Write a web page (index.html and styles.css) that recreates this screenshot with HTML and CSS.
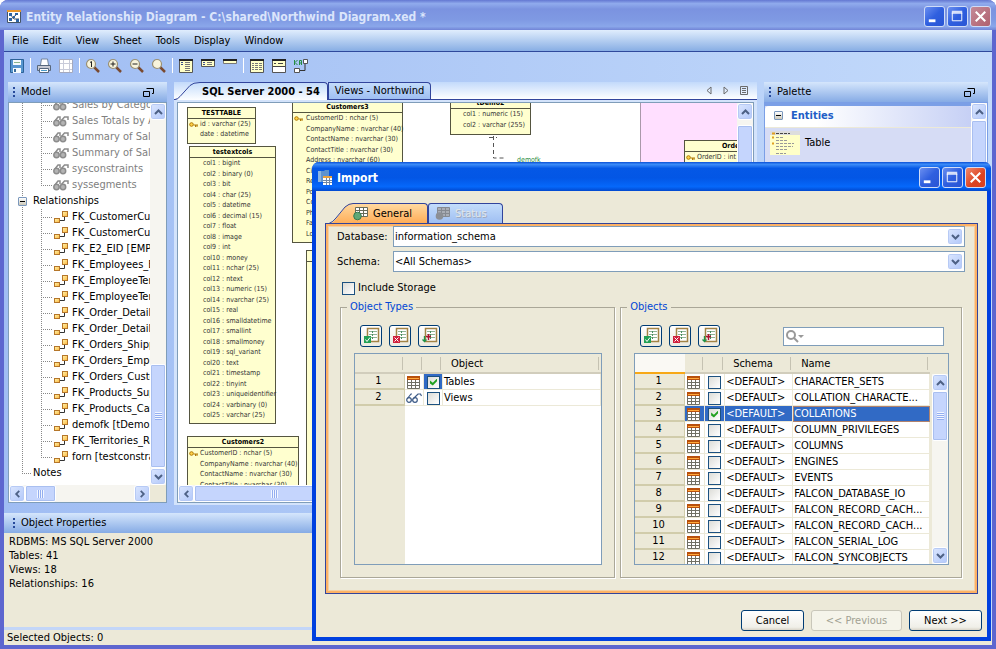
FILE: index.html
```html
<!DOCTYPE html>
<html lang="en">
<head>
  <meta charset="UTF-8">
  <meta name="viewport" content="width=device-width, initial-scale=1.0">
  <title>Entity Relationship Diagram</title>
  <link rel="stylesheet" href="styles.css">
</head>
<body>
  <!-- shared icons -->
  <svg class="defs" width="0" height="0">
    <defs>
      <linearGradient id="gold" x1="0" y1="0" x2="1" y2="1"><stop offset="0" stop-color="#fff6b0"/><stop offset="1" stop-color="#ffb73c"/></linearGradient>
      <linearGradient id="tabOrange" x1="0" y1="0" x2="0" y2="1"><stop offset="0" stop-color="#ffd9a0"/><stop offset="1" stop-color="#ffad57"/></linearGradient>
      <linearGradient id="tabBlue" x1="0" y1="0" x2="0" y2="1"><stop offset="0" stop-color="#c3dcfb"/><stop offset="1" stop-color="#fdfeff"/></linearGradient>
      <symbol id="i-view" viewBox="0 0 16 12"><g fill="#b4b4b4" stroke="#8c8c8c" stroke-width="1.500"><path fill="none" d="M1.500 6.500L5 2h2v3M7.500 6.500L11.500 2H15v3"/><circle cx="3.500" cy="8" r="2.700"/><circle cx="10" cy="8" r="2.700"/></g></symbol>
      <symbol id="i-glasses" viewBox="0 0 16 12"><g fill="none" stroke="#3c5a86" stroke-width="1.200"><circle cx="3" cy="8" r="2.300"/><circle cx="9" cy="8" r="2.300"/><path d="M1 7L5 2h1M7 7l5-5h2.500l1 2M5.300 8h1.400"/></g></symbol>
      <symbol id="i-fk" viewBox="0 0 14 12"><path d="M5.500 9.500h5V4" fill="none" stroke="#333"/><rect x=".5" y="7.500" width="5" height="4" fill="url(#gold)" stroke="#b5762a"/><rect x="8.500" y=".5" width="5" height="5" fill="url(#gold)" stroke="#b5762a"/></symbol>
      <symbol id="i-table" viewBox="0 0 13 13"><path fill="#fff" d="M0 0h13v13H0z"/><path d="M.5 3v9.500h12V3M.5 6.500h12M.5 9.500h12M4.500 3v9M8.500 3v9" fill="none" stroke="#6f6f64"/><path fill="#b8500c" d="M0 0h13v4H0z"/><path fill="#ffa83a" d="M1 2h11v1H1z"/></symbol>
      <symbol id="i-grid" viewBox="0 0 15 14"><path d="M2.500.5h12v9h-12zM2.500 3.500h12M2.500 6.500h12M6.500.5v9M10.500.5v9" fill="#fff" stroke="#676c5a"/><circle cx="4.500" cy="9" r="3.800" fill="#5fa877" stroke="#347a50"/></symbol>
      <symbol id="i-gridoff" viewBox="0 0 15 14"><path d="M2.500.5h12v9h-12zM2.500 3.500h12M2.500 6.500h12M6.500.5v9M10.500.5v9" fill="#a9adb5" stroke="#858991"/><circle cx="4.500" cy="9" r="3.800" fill="#8c8f95"/></symbol>
      <symbol id="i-list" viewBox="0 0 16 16"><path fill="#fff" stroke="#a28345" stroke-width="1.500" d="M3.500 1.500h11v13h-11z"/><path stroke="#8fb396" d="M5 4.500h8M5 7.500h8M5 10.500h8"/><path stroke="#4d8f62" stroke-dasharray="2 1" d="M8.500 4v8"/></symbol>
      <symbol id="i-key" viewBox="0 0 9 6"><circle cx="2.500" cy="2.500" r="1.800" fill="#ffd34a" stroke="#b27a05"/><path d="M4.500 3H9M6.500 3v2M8 3v2" stroke="#b27a05"/></symbol>
      <symbol id="i-up" viewBox="0 0 9 6"><path d="M1 5l3.500-3.500L8 5" fill="none" stroke="#4d6185" stroke-width="2"/></symbol>
      <symbol id="i-down" viewBox="0 0 9 6"><path d="M1 1l3.500 3.500L8 1" fill="none" stroke="#4d6185" stroke-width="2"/></symbol>
      <symbol id="i-left" viewBox="0 0 6 9"><path d="M5 1L1.500 4.500 5 8" fill="none" stroke="#4d6185" stroke-width="2"/></symbol>
      <symbol id="i-right" viewBox="0 0 6 9"><path d="M1 1l3.500 3.500L1 8" fill="none" stroke="#4d6185" stroke-width="2"/></symbol>
      <symbol id="i-float" viewBox="0 0 11 9"><path d="M.5 3.500h6v5h-6zM3.500 .5h7v5H9" fill="none" stroke="#000"/></symbol>
      <symbol id="i-min" viewBox="0 0 20 20"><path fill="#fff" d="M4 13h7v3H4z"/></symbol>
      <symbol id="i-max" viewBox="0 0 20 20"><path fill="none" stroke="#fff" d="M4.500 5.500h10v9h-10zM4 4.500h11M4 6.500h11"/></symbol>
      <symbol id="i-close" viewBox="0 0 20 20"><path stroke="#fff" stroke-width="2.200" d="M5 5l10 10M15 5L5 15"/></symbol>
      <symbol id="i-lens" viewBox="0 0 16 16"><path d="M9 9l5 5" stroke="#7a4a30" stroke-width="2.500"/><circle cx="6" cy="6" r="4.500" fill="#f8f4dc" stroke="#9a9074" stroke-width="1.200"/></symbol>
      <symbol id="i-check" viewBox="0 0 20 20"><use href="#i-list" x="3" y="1" width="16" height="16"/><path fill="#21a055" d="M3 10h7v7H3z"/><path d="M4.500 13.500l1.500 2 3-4" fill="none" stroke="#fff"/></symbol>
      <symbol id="i-uncheck" viewBox="0 0 20 20"><use href="#i-list" x="3" y="1" width="16" height="16"/><path fill="#d01f3c" d="M3 10h7v7H3z"/><path d="M4.500 11.500l4 4M8.500 11.500l-4 4" stroke="#fff"/></symbol>
      <symbol id="i-invert" viewBox="0 0 20 20"><use href="#i-list" x="3" y="1" width="16" height="16"/><path d="M9.500 14V8M7 10.500h5" stroke="#b01030" stroke-width="1.500"/><path d="M5.500 10v6M3.500 13.500l2 2 2-2" fill="none" stroke="#1f9447" stroke-width="1.300"/></symbol>
    </defs>
  </svg>

  <div class="app">
    <header class="titlebar">
      <svg class="app-icon" width="14" height="14"><path fill="#fff" stroke="#456" d="M.5.500h13v12H.5z"/><path fill="#e8972c" d="M0 0h14v2H0z"/><path d="M3 4l4 5h5M4 9l5-4" stroke="#456" fill="none"/><path fill="#2b62a4" d="M2 3h3v3H2zM6 6h2v2H6zM9 9h3v3H9zM8 3h3v2H8zM2 8h3v3H2z"/></svg>
      <h1>Entity Relationship Diagram - C:\shared\Northwind Diagram.xed *</h1>
      <div class="win-buttons">
        <button class="win-btn" aria-label="Minimize"><svg><use href="#i-min"/></svg></button>
        <button class="win-btn" aria-label="Maximize"><svg><use href="#i-max"/></svg></button>
        <button class="win-btn close" aria-label="Close"><svg><use href="#i-close"/></svg></button>
      </div>
    </header>

    <nav class="menu">
      <button>File</button><button>Edit</button><button>View</button><button>Sheet</button><button>Tools</button><button>Display</button><button>Window</button>
    </nav>

    <div class="toolbar">
      <button aria-label="Save"><svg width="16" height="16"><path fill="#5795cf" stroke="#2b6197" d="M1.500 1.500h13v13h-13z"/><path fill="#f5fafd" d="M4 2h8v5H4zM4 10h8v5H4z"/><path stroke="#8bb58c" d="M5 4.500h6"/><path fill="#396c9b" d="M5 11h2v3H5z"/></svg></button>
      <i class="sep"></i>
      <button aria-label="Print"><svg width="16" height="16"><path fill="#fff" stroke="#74869d" d="M4.500 7l1-6h6l1 6"/><path fill="#c7c9d2" stroke="#57677c" d="M1.500 7.500h13v5h-13z"/><path fill="#fff" stroke="#57677c" d="M3.500 10.500h9v4h-9z"/><path stroke="#499ac9" d="M5 12.500h6"/></svg></button>
      <button aria-label="Grid"><svg width="16" height="16"><path fill="#fff" stroke="#a5a9bd" d="M1.500 1.500h13v13h-13z"/><path stroke="#c8cbd9" d="M2 5.500h12M2 11.500h12M5.500 2v12M11.500 2v12"/></svg></button>
      <i class="sep"></i>
      <button aria-label="Actual size"><svg width="16" height="16"><use href="#i-lens"/><path d="M5 4.500l1.500-1V9" fill="none" stroke="#222"/></svg></button>
      <button aria-label="Zoom in"><svg width="16" height="16"><use href="#i-lens"/><path d="M3.500 6h5M6 3.500v5" stroke="#222"/></svg></button>
      <button aria-label="Zoom out"><svg width="16" height="16"><use href="#i-lens"/><path d="M3.500 6h5" stroke="#222"/></svg></button>
      <button aria-label="Zoom"><svg width="16" height="16"><use href="#i-lens"/></svg></button>
      <i class="sep"></i>
      <button aria-label="Show all columns"><svg width="16" height="16"><path fill="#ffffc8" stroke="#555" d="M1.500 1.500h13v13h-13z"/><path fill="#222" d="M1 1h14v2H1z"/><path stroke="#3a4d8c" d="M3 4.500h2M3 6.500h2"/><path stroke="#777" d="M7 4.500h5M7 6.500h5M7 8.500h5M7 10.500h5M7 12.500h5"/></svg></button>
      <button aria-label="Show keys"><svg width="16" height="16"><path fill="#ffffc8" stroke="#555" d="M1.500 1.500h13v7h-13z"/><path fill="#222" d="M1 1h14v2H1z"/><path stroke="#3a4d8c" d="M3 4.500h2M3 6.500h2"/><path stroke="#777" d="M7 4.500h5M7 6.500h5"/></svg></button>
      <button aria-label="Show names"><svg width="16" height="16"><path fill="#ffffc8" stroke="#777" d="M1.500 1.500h13v4h-13z"/><path fill="#222" d="M1 1h14v2H1z"/></svg></button>
      <i class="sep"></i>
      <button aria-label="Table"><svg width="16" height="16"><path fill="#ffffc8" stroke="#555" d="M1.500 1.500h13v13h-13z"/><path fill="#222" d="M1 1h14v2H1z"/><path stroke="#777" d="M3 5.500h2M6 5.500h3M10 5.500h3M3 7.500h2M6 7.500h3M10 7.500h3M3 9.500h2M6 9.500h3M10 9.500h3M3 11.500h2M6 11.500h3M10 11.500h3"/></svg></button>
      <button aria-label="Note"><svg width="16" height="16"><path fill="#fff" stroke="#555" d="M1.500 1.500h13v13h-13z"/><path fill="#ffffc8" d="M2 3h12v5H2z"/><path fill="#222" d="M1 1h14v2H1z"/><path stroke="#444" d="M3 5.500h2M7 5.500h5M2 8.500h12"/></svg></button>
      <button aria-label="Relationship"><svg width="16" height="16"><path stroke="#268c42" fill="none" d="M1.500 2v5M4.500 2l-2.500 2.500L4.500 7M6.500 7V2.500h2V7M6.500 5h2"/><path stroke="#333" d="M6 12.500h6V6" fill="none"/><path fill="#fff" stroke="#555" d="M1.500 10.500h5v4h-5zM10.500 1.500h4v4h-4z"/></svg></button>
    </div>

    <main class="workspace">
      <section class="panel model">
        <h2 class="panel-head"><i class="grip"></i>Model<svg width="11" height="9"><use href="#i-float"/></svg></h2>
        <div class="scroll-grid">
          <div class="tree-view">
            <ul class="tree">
              <li>
                <ul class="views">
                  <li><svg class="ti view"><use href="#i-view"/></svg>Sales by Category</li>
                  <li><svg class="ti view"><use href="#i-view"/></svg>Sales Totals by Amount</li>
                  <li><svg class="ti view"><use href="#i-view"/></svg>Summary of Sales by Quarter</li>
                  <li><svg class="ti view"><use href="#i-view"/></svg>Summary of Sales by Year</li>
                  <li><svg class="ti view"><use href="#i-view"/></svg>sysconstraints</li>
                  <li><svg class="ti view"><use href="#i-view"/></svg>syssegments</li>
                </ul>
              </li>
              <li>
                <div class="node"><i class="toggle"></i>Relationships</div>
                <ul>
                  <li><svg class="ti"><use href="#i-fk"/></svg>FK_CustomerCustomerDemo</li>
                  <li><svg class="ti"><use href="#i-fk"/></svg>FK_CustomerCustomerDemo</li>
                  <li><svg class="ti"><use href="#i-fk"/></svg>FK_E2_EID [EMP]</li>
                  <li><svg class="ti"><use href="#i-fk"/></svg>FK_Employees_Employees</li>
                  <li><svg class="ti"><use href="#i-fk"/></svg>FK_EmployeeTerritories</li>
                  <li><svg class="ti"><use href="#i-fk"/></svg>FK_EmployeeTerritories</li>
                  <li><svg class="ti"><use href="#i-fk"/></svg>FK_Order_Details_Orders</li>
                  <li><svg class="ti"><use href="#i-fk"/></svg>FK_Order_Details_Products</li>
                  <li><svg class="ti"><use href="#i-fk"/></svg>FK_Orders_Shippers</li>
                  <li><svg class="ti"><use href="#i-fk"/></svg>FK_Orders_Employees</li>
                  <li><svg class="ti"><use href="#i-fk"/></svg>FK_Orders_Customers</li>
                  <li><svg class="ti"><use href="#i-fk"/></svg>FK_Products_Suppliers</li>
                  <li><svg class="ti"><use href="#i-fk"/></svg>FK_Products_Categories</li>
                  <li><svg class="ti"><use href="#i-fk"/></svg>demofk [tDemo2]</li>
                  <li><svg class="ti"><use href="#i-fk"/></svg>FK_Territories_Region</li>
                  <li><svg class="ti"><use href="#i-fk"/></svg>forn [testconstraints]</li>
                </ul>
              </li>
              <li><div class="node leaf">Notes</div></li>
            </ul>
          </div>
          <div class="vbar"><span class="sb"><svg><use href="#i-up"/></svg></span><span class="track"></span><span class="thumb tree-thumb"></span><span class="sb"><svg><use href="#i-down"/></svg></span></div>
          <div class="hbar"><span class="sb"><svg><use href="#i-left"/></svg></span><span class="thumb tree-hthumb"></span><span class="track"></span><span class="sb"><svg><use href="#i-right"/></svg></span></div>
          <div class="corner"></div>
        </div>
      </section>

      <section class="diagram">
        <div class="sheet-tabs">
          <svg class="slant" width="26" height="18"><path fill="url(#tabBlue)" d="M0 18L4 17L17 3Q20 0 26 0v18z"/><path d="M0 17.500h1Q4 17 6 14.500L16 3.500Q19 .5 26 .5" fill="none" stroke="#31449c"/></svg>
          <button class="sheet-tab active">SQL Server 2000 - 54</button>
          <button class="sheet-tab">Views - Northwind</button>
          <div class="sheet-nav">
            <svg width="6" height="10"><path d="M5 1v7L1 4.500z" fill="none" stroke="#6b6b6b"/></svg>
            <svg width="6" height="10"><path d="M1 1v7l4-3.500z" fill="none" stroke="#6b6b6b"/></svg>
            <svg width="8" height="10"><path d="M.5.500h7v8h-7zM2 2.500h4M2 4.500h4M2 6.500h4" fill="none" stroke="#6b6b6b"/></svg>
          </div>
        </div>
        <div class="scroll-grid">
          <div class="canvas">
            <div class="zone"></div>
            <svg class="wires" width="400" height="80"><path d="M315.500 33v22h13M311 34.500h8" fill="none" stroke="#555" stroke-dasharray="4 3"/></svg>
            <span class="wire-label">demofk</span>
            <div class="entity e-testtable"><h3>TESTTABLE</h3>
              <p><svg><use href="#i-key"/></svg>id : varchar (25)</p><p>date : datetime</p></div>
            <div class="entity e-ext"><h3>testextcols</h3>
              <p>col1 : bigint</p><p>col2 : binary (0)</p><p>col3 : bit</p><p>col4 : char (25)</p><p>col5 : datetime</p>
              <p>col6 : decimal (15)</p><p>col7 : float</p><p>col8 : image</p><p>col9 : int</p><p>col10 : money</p>
              <p>col11 : nchar (25)</p><p>col12 : ntext</p><p>col13 : numeric (15)</p><p>col14 : nvarchar (25)</p><p>col15 : real</p>
              <p>col16 : smalldatetime</p><p>col17 : smallint</p><p>col18 : smallmoney</p><p>col19 : sql_variant</p><p>col20 : text</p>
              <p>col21 : timestamp</p><p>col22 : tinyint</p><p>col23 : uniqueidentifier</p><p>col24 : varbinary (0)</p><p>col25 : varchar (25)</p></div>
            <div class="entity e-cust3"><h3>Customers3</h3>
              <p><svg><use href="#i-key"/></svg>CustomerID : nchar (5)</p><p>CompanyName : nvarchar (40)</p><p>ContactName : nvarchar (30)</p><p>ContactTitle : nvarchar (30)</p>
              <p>Address : nvarchar (60)</p><p>City</p><p>Region</p><p>PostalCode</p><p>Country</p><p>Phone</p><p>Fax</p><p>Location</p></div>
            <div class="entity e-behind"><h3></h3></div>
            <div class="entity e-cust2"><h3>Customers2</h3>
              <p><svg><use href="#i-key"/></svg>CustomerID : nchar (5)</p><p>CompanyName : nvarchar (40)</p><p>ContactName : nvarchar (30)</p><p>ContactTitle : nvarchar (30)</p></div>
            <div class="entity e-demo"><h3>tDemo2</h3><p>col1 : numeric (15)</p><p>col2 : varchar (255)</p></div>
            <div class="entity e-orders"><h3>Orders</h3><p><svg><use href="#i-key"/></svg>OrderID : int</p></div>
          </div>
          <div class="vbar"><span class="sb"><svg><use href="#i-up"/></svg></span><span class="gap"></span><span class="thumb grow"></span></div>
          <div class="hbar"><span class="sb"><svg><use href="#i-left"/></svg></span><span class="thumb dia-hthumb"></span><span class="track"></span></div>
          <div class="corner"></div>
        </div>
      </section>

      <section class="panel palette">
        <h2 class="panel-head"><i class="grip"></i>Palette<svg width="11" height="9"><use href="#i-float"/></svg></h2>
        <div class="palette-body">
          <div class="palette-list">
            <h3 class="group"><i class="toggle"></i>Entities</h3>
            <div class="item">
              <svg width="30" height="24"><path fill="#ffffc8" d="M0 0h30v24H0z"/><path fill="#ddd" d="M0 0h30v4H0z"/><path stroke="#444" d="M6 2.500h14" stroke-dasharray="3 1"/><path stroke="#999" stroke-dasharray="3 1" d="M6 6.500h8M6 9.500h12M6 12.500h18M6 15.500h17M6 18.500h12M6 22.500h10"/><path stroke="#e0a020" stroke-width="2" d="M2 2.500h3M2 6.500h2M2 12.500h2"/></svg>
              Table
            </div>
          </div>
          <div class="vbar"><span class="sb"><svg><use href="#i-up"/></svg></span><span class="thumb grow"></span></div>
        </div>
      </section>
    </main>

    <section class="props">
      <h2 class="panel-head"><i class="grip"></i>Object Properties</h2>
      <ul>
        <li>RDBMS: MS SQL Server 2000</li>
        <li>Tables: 41</li>
        <li>Views: 18</li>
        <li>Relationships: 16</li>
      </ul>
    </section>
    <footer class="status">Selected Objects: 0</footer>
  </div>

  <div class="dialog" role="dialog" aria-labelledby="dlgTitle">
    <header class="dlg-title">
      <svg width="14" height="15"><path fill="#5d93cf" d="M0 1h6l1-1h4v12H0z"/><path fill="#8bb5e2" d="M0 1h3v11H0z"/><path fill="#fff" d="M5 7h9v8H5z"/><path fill="#e9a03a" d="M5 6h9v2H5z"/><path stroke="#6f87a5" d="M5 10.500h9M5 12.500h9M8.500 8v7M11.500 8v7"/></svg>
      <h2 id="dlgTitle">Import</h2>
      <div class="win-buttons">
        <button class="win-btn" aria-label="Minimize"><svg><use href="#i-min"/></svg></button>
        <button class="win-btn" aria-label="Maximize"><svg><use href="#i-max"/></svg></button>
        <button class="win-btn close" aria-label="Close"><svg><use href="#i-close"/></svg></button>
      </div>
    </header>

    <div class="dlg-body">
      <div class="dlg-tabs">
        <svg class="slant" width="24" height="21"><path fill="url(#tabOrange)" d="M0 21Q4 20 7 16L16 4q4-4 8-4v21z"/><path d="M0 20.500Q4 19 7 15L16 4q4-3.500 8-3.500" fill="none" stroke="#31449c"/></svg>
        <button class="dlg-tab active"><svg width="15" height="14"><use href="#i-grid"/></svg>General</button>
        <button class="dlg-tab" disabled><svg width="15" height="14"><use href="#i-gridoff"/></svg>Status</button>
      </div>

      <div class="page">
        <div class="field">
          <label for="database">Database:</label>
          <div class="combo"><select id="database"><option>information_schema</option></select><span class="sb"><svg><use href="#i-down"/></svg></span></div>
        </div>
        <div class="field">
          <label for="schema">Schema:</label>
          <div class="combo"><select id="schema"><option>&lt;All Schemas&gt;</option></select><span class="sb"><svg><use href="#i-down"/></svg></span></div>
        </div>
        <div class="storage"><input type="checkbox" id="storage"><label for="storage">Include Storage</label></div>

        <div class="groups">
          <fieldset class="types">
            <legend>Object Types</legend>
            <div class="tools">
              <button aria-label="Check all"><svg><use href="#i-check"/></svg></button>
              <button aria-label="Uncheck all"><svg><use href="#i-uncheck"/></svg></button>
              <button aria-label="Invert"><svg><use href="#i-invert"/></svg></button>
            </div>
            <div class="grid-box">
              <table>
                <colgroup><col class="c-num"><col class="c-icon"><col class="c-check"><col></colgroup>
                <thead><tr><th></th><th></th><th></th><th>Object</th></tr></thead>
                <tbody>
                  <tr><th>1</th><td><svg class="tb"><use href="#i-table"/></svg></td><td class="focus"><input type="checkbox" aria-label="Tables" checked></td><td>Tables</td></tr>
                  <tr><th>2</th><td><svg class="gl"><use href="#i-glasses"/></svg></td><td><input type="checkbox" aria-label="Views"></td><td>Views</td></tr>
                </tbody>
              </table>
              <div class="filler"></div>
            </div>
          </fieldset>

          <fieldset class="objects">
            <legend>Objects</legend>
            <div class="tools">
              <button aria-label="Check all"><svg><use href="#i-check"/></svg></button>
              <button aria-label="Uncheck all"><svg><use href="#i-uncheck"/></svg></button>
              <button aria-label="Invert"><svg><use href="#i-invert"/></svg></button>
              <div class="search"><svg width="18" height="13"><circle cx="5" cy="5" r="4" fill="none" stroke="#999" stroke-width="2"/><path d="M8 8l4 4" stroke="#999" stroke-width="2"/><path fill="#999" d="M12 5h6l-3 3z"/></svg><input type="text" aria-label="Search objects"></div>
            </div>
            <div class="grid-box">
              <table>
                <colgroup><col class="c-num"><col class="c-icon"><col class="c-check"><col class="c-schema"><col></colgroup>
                <thead><tr><th class="sorted"></th><th></th><th></th><th>Schema</th><th>Name</th></tr></thead>
                <tbody>
                  <tr><th>1</th><td><svg class="tb"><use href="#i-table"/></svg></td><td><input type="checkbox" aria-label="CHARACTER_SETS"></td><td>&lt;DEFAULT&gt;</td><td>CHARACTER_SETS</td></tr>
                  <tr><th>2</th><td><svg class="tb"><use href="#i-table"/></svg></td><td><input type="checkbox" aria-label="COLLATION_CHARACTER"></td><td>&lt;DEFAULT&gt;</td><td>COLLATION_CHARACTE...</td></tr>
                  <tr class="selected"><th>3</th><td><svg class="tb"><use href="#i-table"/></svg></td><td><input type="checkbox" aria-label="COLLATIONS" checked></td><td>&lt;DEFAULT&gt;</td><td>COLLATIONS</td></tr>
                  <tr><th>4</th><td><svg class="tb"><use href="#i-table"/></svg></td><td><input type="checkbox" aria-label="COLUMN_PRIVILEGES"></td><td>&lt;DEFAULT&gt;</td><td>COLUMN_PRIVILEGES</td></tr>
                  <tr><th>5</th><td><svg class="tb"><use href="#i-table"/></svg></td><td><input type="checkbox" aria-label="COLUMNS"></td><td>&lt;DEFAULT&gt;</td><td>COLUMNS</td></tr>
                  <tr><th>6</th><td><svg class="tb"><use href="#i-table"/></svg></td><td><input type="checkbox" aria-label="ENGINES"></td><td>&lt;DEFAULT&gt;</td><td>ENGINES</td></tr>
                  <tr><th>7</th><td><svg class="tb"><use href="#i-table"/></svg></td><td><input type="checkbox" aria-label="EVENTS"></td><td>&lt;DEFAULT&gt;</td><td>EVENTS</td></tr>
                  <tr><th>8</th><td><svg class="tb"><use href="#i-table"/></svg></td><td><input type="checkbox" aria-label="FALCON_DATABASE_IO"></td><td>&lt;DEFAULT&gt;</td><td>FALCON_DATABASE_IO</td></tr>
                  <tr><th>9</th><td><svg class="tb"><use href="#i-table"/></svg></td><td><input type="checkbox" aria-label="FALCON_RECORD_CACHE"></td><td>&lt;DEFAULT&gt;</td><td>FALCON_RECORD_CACH...</td></tr>
                  <tr><th>10</th><td><svg class="tb"><use href="#i-table"/></svg></td><td><input type="checkbox" aria-label="FALCON_RECORD_CACHE"></td><td>&lt;DEFAULT&gt;</td><td>FALCON_RECORD_CACH...</td></tr>
                  <tr><th>11</th><td><svg class="tb"><use href="#i-table"/></svg></td><td><input type="checkbox" aria-label="FALCON_SERIAL_LOG"></td><td>&lt;DEFAULT&gt;</td><td>FALCON_SERIAL_LOG</td></tr>
                  <tr><th>12</th><td><svg class="tb"><use href="#i-table"/></svg></td><td><input type="checkbox" aria-label="FALCON_SYNCOBJECTS"></td><td>&lt;DEFAULT&gt;</td><td>FALCON_SYNCOBJECTS</td></tr>
                </tbody>
              </table>
              <div class="vbar"><span class="sb"><svg><use href="#i-up"/></svg></span><span class="thumb list-thumb"></span><span class="track"></span><span class="sb"><svg><use href="#i-down"/></svg></span></div>
            </div>
          </fieldset>
        </div>
      </div>

      <div class="actions">
        <button class="btn">Cancel</button>
        <button class="btn wide" disabled>&lt;&lt; Previous</button>
        <button class="btn next">Next &gt;&gt;</button>
      </div>
    </div>
  </div>
</body>
</html>
```
FILE: styles.css
```css
* {
  box-sizing: border-box;
}
body {
  margin: 0;
  height: 100vh;
  overflow: hidden;
  position: relative;
  background: #fff;
  color: #000;
  font-family: "DejaVu Sans Condensed", "Noto Sans", sans-serif;
  font-size: 11px;
  line-height: 16px;
}
h1, h2, h3, p, ul {
  margin: 0;
  padding: 0;
  font-size: inherit;
  font-weight: normal;
}
ul {
  list-style: none;
}
button, input, select {
  font: inherit;
  color: inherit;
}
button {
  padding: 0;
  border: 0;
  background: none;
}
.defs {
  position: absolute;
}

/* main window */
.app {
  height: 100%;
  display: flex;
  flex-direction: column;
  border: solid #5d66cf;
  border-width: 0 4px 4px;
  border-radius: 8px 8px 0 0;
  background: linear-gradient(90deg, #a0bdf3, #c3dafb);
}
.titlebar {
  height: 30px;
  flex: none;
  margin: 0 -4px;
  padding: 3px 5px 0 7px;
  display: flex;
  align-items: center;
  gap: 5px;
  border-radius: 8px 8px 0 0;
  background: linear-gradient(#6377d2, #90abed 12%, #7b93e0 30%, #7f99e3 65%, #8aa7ea 88%, #7184d6);
}
.titlebar h1 {
  font-size: 12px;
  font-weight: bold;
  color: #dbe5fb;
  white-space: nowrap;
}
.win-buttons {
  margin-left: auto;
  display: flex;
  gap: 2px;
}
.win-btn {
  width: 21px;
  height: 21px;
  border: 1px solid #cfdcf8;
  border-radius: 3px;
  background: linear-gradient(135deg, #6b8ff0, #2f5fdf 50%, #2a55d4);
}
.win-btn svg {
  display: block;
  width: 19px;
  height: 19px;
}
.titlebar .close {
  background: linear-gradient(135deg, #c48a98, #b0606e);
}
.menu {
  height: 22px;
  flex: none;
  padding-left: 8px;
  display: flex;
  gap: 14px;
  align-items: center;
  border-bottom: 1px solid #2f499c;
  background: linear-gradient(#e0edfd, #88aee4);
}
.toolbar {
  height: 27px;
  flex: none;
  padding-left: 5px;
  display: flex;
  align-items: center;
  gap: 6px;
}
.toolbar svg {
  display: block;
}
.sep {
  width: 1px;
  height: 15px;
  margin: 0 -1px;
  background: #fff;
}
.workspace {
  flex: 1;
  min-height: 0;
  display: flex;
  gap: 7px;
  padding: 3px 4px 8px;
}
.panel {
  display: flex;
  flex-direction: column;
  margin-bottom: 2px;
}
.model {
  width: 159px;
}
.palette {
  width: 224px;
}
.panel-head {
  height: 20px;
  flex: none;
  display: flex;
  align-items: center;
  gap: 6px;
  padding: 0 13px 0 5px;
  background: linear-gradient(#d5e6fc, #86abe5);
}
.panel-head svg {
  margin-left: auto;
}
.grip {
  width: 2px;
  height: 10px;
  background: repeating-linear-gradient(#274a9b 0 2px, transparent 2px 4px);
}

/* scroll bars */
.scroll-grid {
  flex: 1;
  min-height: 0;
  display: grid;
  grid-template: minmax(0, 1fr) 17px / minmax(0, 1fr) 16px;
  border: 1px solid #7f9db9;
}
.corner {
  background: #ece9d8;
}
.vbar, .hbar {
  display: flex;
  background: #f6f5f0;
  min-height: 0;
}
.vbar {
  width: 16px;
  flex-direction: column;
}
.sb {
  width: 16px;
  height: 17px;
  flex: none;
  display: flex;
  align-items: center;
  justify-content: center;
  border: 1px solid #fff;
  border-radius: 3px;
  background: linear-gradient(135deg, #dbe6fe, #b2c8fa);
  box-shadow: inset 0 0 0 1px #b7caf5;
}
.sb svg {
  width: 9px;
  height: 8px;
}
.track {
  flex: 1;
}
.gap {
  height: 5px;
}
.thumb {
  flex: none;
  display: flex;
  align-items: center;
  justify-content: center;
  border: 1px solid #fff;
  border-radius: 2px;
  box-shadow: inset 0 0 0 1px #a9bff0;
  background: #c5d5fd;
}
.thumb::before {
  content: "";
  width: 7px;
  height: 8px;
  background: repeating-linear-gradient(#f2f6ff 0 1px, #93aef0 1px 2px);
}
.hbar .thumb::before {
  background: repeating-linear-gradient(90deg, #f2f6ff 0 1px, #93aef0 1px 2px);
}
.grow {
  flex: 1;
}
.tree-thumb {
  height: 104px;
}
.tree-hthumb {
  width: 31px;
}
.dia-hthumb {
  width: 160px;
}
.list-thumb {
  height: 50px;
}

/* model tree */
.tree-view {
  overflow: hidden;
  background: #fff;
}
.tree {
  margin-top: -6px;
  white-space: nowrap;
  background: repeating-linear-gradient(#888 0 1px, transparent 1px 2px) 13px 0 / 1px calc(100% - 8px) no-repeat;
}
.tree ul {
  padding-left: 32px;
}
.tree ul li {
  height: 16px;
  display: flex;
  align-items: center;
}
.tree ul li::before {
  content: "";
  width: 12px;
  height: 16px;
  flex: none;
  background:
    repeating-linear-gradient(#888 0 1px, transparent 1px 2px) 0 0 / 1px 100% no-repeat,
    repeating-linear-gradient(90deg, #888 0 1px, transparent 1px 2px) 0 8px / 11px 1px no-repeat;
}
.tree ul li:last-child::before {
  background-size: 1px 8px, 11px 1px;
}
.ti {
  width: 14px;
  height: 12px;
  flex: none;
  margin: 0 4px 0 1px;
}
.ti.view {
  width: 16px;
  margin: 0 3px 0 0;
}
.views {
  color: #808080;
}
.node {
  height: 16px;
  padding-left: 9px;
  display: flex;
  align-items: center;
}
.node.leaf {
  padding-left: 24px;
  background: repeating-linear-gradient(90deg, #888 0 1px, transparent 1px 2px) 13px 8px / 10px 1px no-repeat;
}
.toggle {
  width: 9px;
  height: 9px;
  flex: none;
  margin-right: 6px;
  border: 1px solid #7b98bd;
  border-radius: 1px;
  background: linear-gradient(#000, #000) 1px 3px / 5px 1px no-repeat, linear-gradient(#fff, #cdc9b9);
}

/* diagram */
.diagram {
  flex: 1;
  min-width: 0;
  display: flex;
  flex-direction: column;
  background: #d3e3fb;
  padding-bottom: 2px;
}
.diagram .scroll-grid {
  margin: 2px 3px 0;
}
.sheet-tabs {
  height: 18px;
  flex: none;
  display: flex;
  border-bottom: 1px solid #31449c;
  background: linear-gradient(#c3dafb, #fdfeff);
}
.slant {
  flex: none;
}
.sheet-tab {
  padding: 0 6px;
  border: 1px solid #31449c;
  border-bottom: 0;
  border-radius: 0 4px 0 0;
  background: linear-gradient(#c3dcfb, #9fbff2);
  white-space: nowrap;
}
.sheet-tab.active {
  height: 18px;
  padding: 0 7px 0 2px;
  border-left: 0;
  font-weight: bold;
  background: linear-gradient(#c3dcfb, #fdfeff);
}
.sheet-nav {
  margin-left: auto;
  padding-right: 9px;
  display: flex;
  align-items: center;
  gap: 11px;
}
.canvas {
  position: relative;
  overflow: hidden;
  background: #fff;
  font-size: 7px;
}
.zone {
  position: absolute;
  inset: 0 0 0 462px;
  background: #ffdfff;
  border-left: 1px solid #a9a;
}
.wires, .wire-label {
  position: absolute;
  left: 0;
  top: 0;
}
.wire-label {
  left: 339px;
  top: 49px;
  color: #2c8c45;
}
.entity {
  position: absolute;
  display: flex;
  flex-direction: column;
  border: 1px solid #555540;
  background: #ffffcf;
  color: #333;
  white-space: nowrap;
}
.entity h3 {
  height: 11px;
  flex: none;
  line-height: 11px;
  font-weight: bold;
  text-align: center;
  color: #000;
  border-bottom: 1px solid #555540;
}
.entity p {
  flex: 1;
  position: relative;
  line-height: 10px;
  padding-left: 12px;
  min-height: 0;
}
.entity svg {
  position: absolute;
  left: 1px;
  top: 3px;
  width: 9px;
  height: 6px;
}
.e-testtable { left: 9px; top: 4px; width: 69px; height: 37px; padding-bottom: 4px; }
.e-ext { left: 11px; top: 43px; width: 87px; height: 278px; padding-bottom: 2px; }
.e-ext p { padding-left: 13px; }
.e-cust3 { left: 114px; top: -2px; width: 111px; height: 142px; padding-bottom: 3px; }
.e-cust3 p { padding-left: 13px; }
.e-behind { left: 128px; top: 147px; width: 90px; height: 300px; }
.e-cust2 { left: 9px; top: 333px; width: 112px; height: 55px; }
.e-demo { left: 272px; top: -6px; width: 81px; height: 38px; padding-bottom: 4px; }
.e-orders { left: 506px; top: 37px; width: 100px; height: 25px; }

/* palette */
.palette-body {
  flex: 1;
  min-height: 0;
  display: flex;
  border: 1px solid #7b9fe6;
  background: #7b9fe6;
}
.palette-list {
  flex: 1;
  margin-top: 3px;
  background: #d6dcf5;
}
.group {
  height: 22px;
  display: flex;
  align-items: center;
  padding: 0 9px 2px;
  border-radius: 4px 4px 0 0;
  border-bottom: 1px solid #ece9d8;
  background: linear-gradient(90deg, #fff 25%, #c6d0f5);
  color: #215dc6;
  font-weight: bold;
}
.group .toggle {
  margin-right: 8px;
}
.item {
  display: flex;
  align-items: center;
  gap: 5px;
  padding: 3px 5px;
}

/* object properties */
.props {
  height: 117px;
  flex: none;
  margin-right: 4px;
  background: #ece9d8;
  border-bottom: 3px solid #c3d6f8;
}
.props .panel-head {
  padding-left: 9px;
}
.props ul {
  padding: 2px 5px;
  line-height: 14px;
}
.status {
  flex: none;
  height: 15px;
  padding-left: 3px;
  line-height: 15px;
  background: #ece9d8;
}

/* import dialog */
.dialog {
  position: absolute;
  inset: 162px 5px 8px 312px;
  display: flex;
  flex-direction: column;
  border: solid #0040df;
  border-width: 0 4px 4px;
  border-radius: 7px 7px 0 0;
  background: #ece9d8;
}
.dlg-title {
  height: 29px;
  flex: none;
  margin: 0 -4px;
  padding: 2px 5px 0 6px;
  display: flex;
  align-items: center;
  gap: 5px;
  border-radius: 7px 7px 0 0;
  background: linear-gradient(#0a4fd6, #3c8cf8 8%, #0558e6 22%, #0356e5 55%, #0568fb 85%, #0148cf);
}
.dlg-title h2 {
  font-size: 12px;
  font-weight: bold;
  color: #fff;
}
.dlg-title .close {
  background: linear-gradient(135deg, #f0896b, #dc4220 60%);
}
.dlg-body {
  flex: 1;
  min-height: 0;
  display: flex;
  flex-direction: column;
  padding: 12px 9px 6px;
}
.dlg-tabs {
  display: flex;
  height: 20px;
  flex: none;
  padding-left: 4px;
}
.dlg-tab {
  height: 20px;
  display: flex;
  align-items: center;
  gap: 5px;
  padding: 0 15px 0 6px;
  border: 1px solid #31449c;
  border-bottom: 0;
  border-radius: 3px 4px 0 0;
  background: linear-gradient(#c3dcfb, #9fbff2);
}
.dlg-tab.active {
  padding-left: 0;
  border-left: 0;
  border-radius: 0 4px 0 0;
  background: linear-gradient(#ffd9a0, #ffad57);
}
.dlg-tab:disabled {
  color: #e2e6e8;
  text-shadow: 1px 1px #9da8bd;
}
.page {
  flex: 1;
  min-height: 0;
  display: flex;
  flex-direction: column;
  border: 1px solid #31449c;
  box-shadow: inset 0 0 0 2px #fdb265, inset 0 0 0 3px #f5d0a4;
  padding: 2px 12px 15px 11px;
}
.field {
  display: flex;
  align-items: center;
  margin-bottom: 4px;
}
.field label {
  width: 56px;
}
.combo {
  flex: 1;
  height: 21px;
  display: flex;
  align-items: center;
  padding-right: 1px;
  border: 1px solid #7f9db9;
  background: #fff;
}
.combo select {
  flex: 1;
  height: 19px;
  padding: 0 1px;
  appearance: none;
  border: 0;
  background: none;
}
.storage {
  display: flex;
  align-items: center;
  gap: 3px;
  padding: 4px 5px 3px;
}
input[type="checkbox"] {
  appearance: none;
  width: 13px;
  height: 13px;
  margin: 0;
  display: block;
  flex: none;
  border: 1px solid #1c5180;
  background: linear-gradient(135deg, #dcdcd7, #fff);
}
input[type="checkbox"]:checked::before {
  content: "";
  display: block;
  width: 7px;
  height: 7px;
  margin: 2px;
  background: #21a121;
  clip-path: polygon(0 30%, 40% 60%, 100% 0, 100% 40%, 40% 100%, 0 70%);
}
.groups {
  flex: 1;
  min-height: 0;
  display: flex;
  gap: 5px;
  padding: 0 3px;
}
fieldset {
  min-width: 0;
  min-height: 0;
  margin: 0;
  padding: 10px 12px 12px 13px;
  display: flex;
  flex-direction: column;
  border: 1px solid #aaa798;
  box-shadow: 1px 1px #fff, inset 1px 0 #fff;
}
.types {
  flex: 249;
}
.objects {
  flex: 316;
}
legend {
  margin-left: -7px;
  padding: 0 3px;
  color: #0046d5;
}
.tools {
  display: flex;
  flex: none;
  align-items: center;
  gap: 7px;
  padding: 0 5px 6px 6px;
}
.tools button {
  width: 22px;
  height: 22px;
  border: 1px solid #003c74;
  border-radius: 3px;
  background: linear-gradient(#fff, #ebeae0);
}
.tools button svg {
  display: block;
  width: 20px;
  height: 20px;
}
.search {
  width: 161px;
  height: 19px;
  margin-left: auto;
  padding: 0 2px;
  display: flex;
  align-items: center;
  border: 1px solid #7f9db9;
  background: #fff;
}
.search input {
  flex: 1;
  min-width: 0;
  border: 0;
  padding: 0;
  background: none;
  outline: none;
}
.grid-box {
  flex: 1;
  min-height: 0;
  overflow: hidden;
  position: relative;
  border: 1px solid #7f9db9;
  background: #fff;
}
.types .grid-box {
  display: flex;
  flex-direction: column;
}
.objects .grid-box {
  padding-right: 18px;
  background: #ece9d8;
}
.objects .vbar {
  position: absolute;
  right: 0;
  top: 20px;
  bottom: 0;
}
.filler {
  flex: 1;
  width: 50px;
  background: #ece9d8;
}
table {
  width: 100%;
  table-layout: fixed;
  border-collapse: separate;
  border-spacing: 0;
  background: #fff;
}
.c-num { width: 50px; }
.c-icon { width: 19px; }
.c-check { width: 19px; }
.c-schema { width: 68px; }
.objects .c-icon, .objects .c-check { width: 20px; }
th {
  padding: 0;
  font-weight: normal;
  background: #ece9d8;
}
thead th {
  height: 20px;
  padding: 2px 0 0 8px;
  text-align: left;
  border-bottom: 2px solid #d1cdbc;
  background: linear-gradient(#c5c2b2, #c5c2b2) right 2px top 3px / 1px 13px no-repeat #ece9d8;
}
thead .sorted {
  background: #faf9f4;
  border-bottom: 2px solid #f7a817;
}
tbody th {
  height: 16px;
  line-height: 14px;
  border-bottom: 2px solid #d1ccab;
  border-right: 1px solid #d1ccab;
  padding-right: 2px;
}
td {
  height: 16px;
  line-height: 15px;
  padding: 0 0 0 1px;
  border-bottom: 1px solid #ece9d8;
  border-right: 1px solid #ece9d8;
  white-space: nowrap;
  overflow: hidden;
}
td input[type="checkbox"] {
  margin: 1px 2px 0;
}
.tb {
  display: block;
  width: 13px;
  height: 13px;
  margin: 1px 1px 0;
}
.gl {
  display: block;
  width: 16px;
  height: 12px;
}
.focus {
  background: #316ac5;
}
.selected td {
  background: #316ac5;
  color: #fff;
}
.selected td:last-child {
  outline: 1px solid #b0826d;
  outline-offset: -1px;
}
.actions {
  flex: none;
  display: flex;
  justify-content: flex-end;
  gap: 7px;
  padding-top: 16px;
  margin-right: -4px;
}
.btn {
  width: 63px;
  height: 21px;
  border: 1px solid #003c74;
  border-radius: 3px;
  background: linear-gradient(#fff, #f0efe8 85%, #d9d4c8);
}
.btn.wide {
  width: 91px;
}
.btn.next {
  width: 73px;
}
.btn:disabled {
  color: #a1a192;
  border-color: #c9c7ba;
  background: #f5f4ea;
}
```
